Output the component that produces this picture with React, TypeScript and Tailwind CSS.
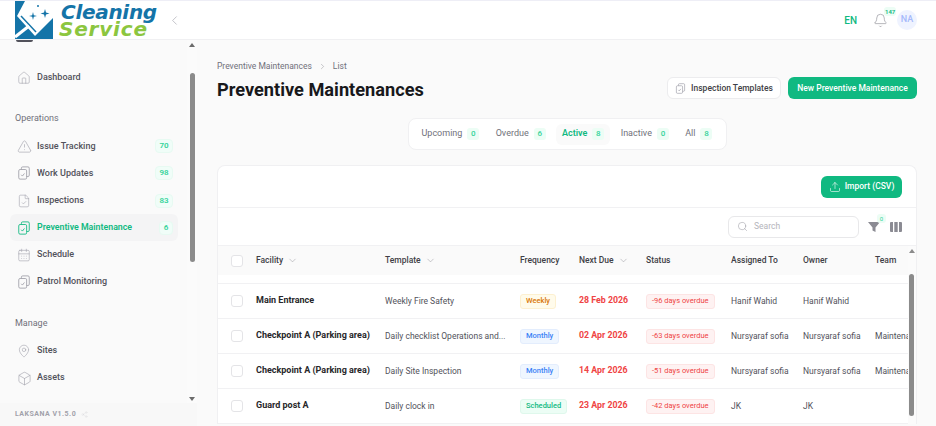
import React from "react";
import { Bell, Box, CalendarDays, ChevronDown, ChevronLeft, ChevronRight, FileCheck, Home, MapPin, Search, Share2, TriangleAlert, Upload } from "lucide-react";

const font = { fontFamily: "Roboto, sans-serif" };
const tableCols = "grid grid-cols-[25px_129px_135px_59px_67px_85px_72px_72px_40px] items-center";

function ClipsIcon({ className = "" }: { className?: string }) {
  return (
    <svg viewBox="0 0 16 16" fill="none" stroke="currentColor" strokeWidth="1" className={className}>
      <rect x="2" y="4" width="9" height="11" rx="1.5" />
      <path d="M5 4V2.500A1.500 1.500 0 0 1 6.500 1h6A1.500 1.500 0 0 1 14 2.500v8a1.500 1.500 0 0 1-1.500 1.500H11" />
      <path d="M4.800 10l1.400 1.500 2.300-3" />
    </svg>
  );
}

function Logo() {
  return (
    <div className="flex items-start">
      <svg viewBox="0 0 38 38" className="w-[38px] h-[38px] ml-[15px] shrink-0">
        <rect width="38" height="38" fill="#1474a8" />
        <path d="M10 0H38V17L20 35L2 15Z" fill="#fff" />
        <path d="M6 15L21 31" stroke="#1474a8" strokeWidth="1.500" />
        <path d="M0 36L14 25" stroke="#fff" strokeWidth="3" />
        <path d="M18 11l.8 3.200 3.200.8-3.200.8L18 19l-.8-3.200-3.200-.8 3.200-.8zM30 8l1 3.500 3.500 1-3.500 1-1 3.500-1-3.500-3.500-1 3.500-1z" fill="#1474a8" />
        <circle cx="23" cy="5" r="1" fill="#1474a8" />
      </svg>
      <div className="ml-[8px] mt-[1px] font-bold italic" style={{ fontFamily: "'DejaVu Sans', sans-serif" }}>
        <div className="text-[#1474a8] text-[20px] leading-[20px] tracking-[-0.3px]">Cleaning</div>
        <div className="text-[#8cc63f] text-[20px] leading-[15px] ml-[-2px] tracking-[0.8px]">Service</div>
      </div>
    </div>
  );
}

function NavItem({ label, icon, count, active }: { label: string; icon: React.ReactNode; count?: number; active?: boolean }) {
  return (
    <div className={`mx-[10px] h-[27.2px] w-[168px] flex items-center pl-[6px] pr-[5px] rounded-md ${active ? "bg-[#f4f4f5] text-[#10b981]" : "text-[#52525b]"}`}>
      <span className={`w-[16px] h-[16px] flex items-center justify-center ${active ? "text-[#10b981]" : "text-[#a1a1aa]"}`}>{icon}</span>
      <span className={`ml-[5px] flex-1 ${active ? "text-[8.800px] font-semibold" : "text-[9px] font-medium"}`}>{label}</span>
      {count !== undefined && (
        <span className={`h-[14px] rounded-[4px] bg-[#f0fdf8] border border-[#e7faf2] text-[#34d399] text-[8px] font-semibold flex items-center justify-center ${active ? "w-[14px]" : "w-[18px]"}`}>{count}</span>
      )}
    </div>
  );
}

function Sidebar() {
  return (
    <aside className="relative w-[197px] shrink-0 flex flex-col bg-[#fafafa] overflow-hidden">
      <div className="flex-1">
        <div className="ml-[16px] h-[2px] w-[17px] rounded-b bg-[#52525b]" />
        <div className="pt-[22px]">
          <NavItem label="Dashboard" icon={<Home size={14} strokeWidth={1} />} />
        </div>
        <div className="mt-[21px] ml-[15px] h-[14px] text-[9px] text-[#71717a] flex items-center">Operations</div>
        <div className="mt-[6.500px]">
          <NavItem label="Issue Tracking" count={70} icon={<TriangleAlert size={15} strokeWidth={1} />} />
          <NavItem label="Work Updates" count={98} icon={<ClipsIcon className="w-[14px] h-[14px]" />} />
          <NavItem label="Inspections" count={83} icon={<FileCheck size={14} strokeWidth={1} />} />
          <NavItem label="Preventive Maintenance" count={6} active icon={<ClipsIcon className="w-[14px] h-[14px]" />} />
          <NavItem label="Schedule" icon={<CalendarDays size={14} strokeWidth={1} />} />
          <NavItem label="Patrol Monitoring" icon={<ClipsIcon className="w-[14px] h-[14px]" />} />
        </div>
        <div className="mt-[20.500px] ml-[15px] h-[14px] text-[9px] text-[#71717a] flex items-center">Manage</div>
        <div className="mt-[7px]">
          <NavItem label="Sites" icon={<MapPin size={14} strokeWidth={1} />} />
          <NavItem label="Assets" icon={<Box size={15} strokeWidth={1} />} />
        </div>
      </div>
      <div className="h-[23px] shrink-0 bg-[#f8f8f8] flex items-center pl-[15px] gap-[5px] text-[#a1a1aa]">
        <span className="text-[7px] font-bold tracking-[0.5px]">LAKSANA V1.5.0</span>
        <Share2 size={7} strokeWidth={1} className="text-[#d4d4d8]" />
      </div>
      <div className="absolute right-0 top-0 bottom-[23px] w-[10px] bg-[#fbfbfb]">
        <div className="absolute left-[2px] top-[3px] border-x-[3px] border-x-transparent border-b-[4px] border-b-[#6b6b6b]" />
        <div className="absolute left-[3px] top-[33px] h-[189px] w-[5px] rounded-full bg-[#8b8b8b]" />
        <div className="absolute left-[2px] bottom-[2px] border-x-[3px] border-x-transparent border-t-[4px] border-t-[#6b6b6b]" />
      </div>
    </aside>
  );
}

function TabItem({ label, n, active }: { label: string; n: number; active?: boolean }) {
  return (
    <div className={`h-[21px] px-[6px] rounded-md flex items-center gap-[5px] ${active ? "bg-[#fafafa] text-[#10b981] font-semibold" : "text-[#71717a]"}`}>
      <span className="text-[9px]">{label}</span>
      <span className="w-[12px] h-[12px] rounded-[3px] bg-[#ecfdf5] text-[#34d399] text-[8px] font-medium flex items-center justify-center">{n}</span>
    </div>
  );
}

function SortHead({ label }: { label: string }) {
  return (
    <div className="flex items-center gap-[4px]">
      {label}
      <ChevronDown size={11} strokeWidth={1} className="text-[#8b8b93]" />
    </div>
  );
}

const rows = [
  { facility: "Main Entrance", template: "Weekly Fire Safety", freq: "Weekly", due: "28 Feb 2026", status: "-96 days overdue", assigned: "Hanif Wahid", owner: "Hanif Wahid", team: "" },
  { facility: "Checkpoint A (Parking area)", template: "Daily checklist Operations and...", freq: "Monthly", due: "02 Apr 2026", status: "-63 days overdue", assigned: "Nursyaraf sofia", owner: "Nursyaraf sofia", team: "Maintenance" },
  { facility: "Checkpoint A (Parking area)", template: "Daily Site Inspection", freq: "Monthly", due: "14 Apr 2026", status: "-51 days overdue", assigned: "Nursyaraf sofia", owner: "Nursyaraf sofia", team: "Maintenance" },
  { facility: "Guard post A", template: "Daily clock in", freq: "Scheduled", due: "23 Apr 2026", status: "-42 days overdue", assigned: "JK", owner: "JK", team: "" },
];

const freqStyle: Record<string, string> = {
  Weekly: "bg-[#fffbeb] border-[#fdf0d0] text-[#d97706]",
  Monthly: "bg-[#eff6ff] border-[#e3edfd] text-[#3b82f6]",
  Scheduled: "bg-[#ecfdf5] border-[#dff8ec] text-[#10b981]",
};

function Checkbox() {
  return <div className="w-[12px] h-[12px] rounded-[3px] bg-white border border-[#e4e4e7]" />;
}

function DataTable() {
  return (
    <div className="relative">
      <div className={`${tableCols} h-[29px] pl-[13px] bg-[#fafafa] text-[8.500px] font-medium text-[#3f3f46]`}>
        <Checkbox />
        <SortHead label="Facility" />
        <SortHead label="Template" />
        <div>Frequency</div>
        <SortHead label="Next Due" />
        <div>Status</div>
        <div>Assigned To</div>
        <div>Owner</div>
        <div>Team</div>
      </div>
      <div className="h-[9px] border-b border-[#f1f1f3]" />
      {rows.map((r, i) => (
        <div key={i} className={`${tableCols} h-[35px] pl-[13px] border-b border-[#f1f1f3] text-[8.500px] text-[#52525b]`}>
          <Checkbox />
          <div className="font-bold text-[9px] text-[#27272a] whitespace-nowrap">{r.facility}</div>
          <div className="whitespace-nowrap">{r.template}</div>
          <div>
            <span className={`inline-flex items-center h-[15px] px-[5px] rounded-[3px] border text-[7.500px] font-medium ${freqStyle[r.freq]}`}>{r.freq}</span>
          </div>
          <div className="font-bold text-[8.800px] text-[#ef4444] whitespace-nowrap">{r.due}</div>
          <div>
            <span className="inline-flex items-center h-[15px] px-[5px] rounded-[3px] border border-[#fde4e4] bg-[#fef2f2] text-[#ef4444] text-[7.500px] whitespace-nowrap">{r.status}</span>
          </div>
          <div className="whitespace-nowrap">{r.assigned}</div>
          <div className="whitespace-nowrap">{r.owner}</div>
          <div className="whitespace-nowrap overflow-hidden">{r.team}</div>
        </div>
      ))}
      <div className="absolute right-0 top-0 bottom-0 w-[8px] bg-[#fbfbfb]">
        <div className="absolute left-[1px] top-[3px] border-x-[3px] border-x-transparent border-b-[4px] border-b-[#8b8b8b]" />
        <div className="absolute left-[1px] top-[28px] h-[142px] w-[5px] rounded-full bg-[#8b8b8b]" />
      </div>
    </div>
  );
}

export default function App() {
  return (
    <div className="w-[936px] h-[426px] overflow-hidden flex flex-col bg-[#fafafa]" style={font}>
      <header className="h-[40px] shrink-0 bg-white border-t border-t-[#eeeef6] border-b border-b-[#f0f0f2] flex items-center">
        <div className="w-[197px] h-full flex items-start relative">
          <Logo />
          <ChevronLeft size={15} strokeWidth={1} className="absolute left-[167px] top-[12px] text-[#a1a1aa]" />
        </div>
        <div className="ml-auto flex items-center pr-[19px]">
          <span className="text-[10px] font-medium text-[#10b981]">EN</span>
          <div className="relative ml-[16px] mr-[9px]">
            <Bell size={15} strokeWidth={1} className="text-[#8b8b93]" />
            <span className="absolute left-[11px] top-[-6px] text-[6px] font-semibold text-[#10b981] bg-[#ecfdf5] rounded-[3px] px-[1px]">147</span>
          </div>
          <div className="w-[20px] h-[20px] rounded-full bg-[#eff3ff] text-[#a5b9fb] text-[9px] font-medium flex items-center justify-center">NA</div>
        </div>
      </header>
      <div className="flex-1 flex min-h-0">
        <Sidebar />
        <main className="flex-1 min-w-0 pl-[20px] pr-[19px] overflow-hidden">
          <div className="flex justify-between">
            <div>
              <div className="mt-[20px] h-[12px] flex items-center gap-[6px] text-[8.500px] text-[#71717a]">
                <span>Preventive Maintenances</span>
                <ChevronRight size={9} strokeWidth={1} />
                <span>List</span>
              </div>
              <h1 className="mt-[6px] text-[18.200px] leading-[24px] font-bold text-[#18181b]">Preventive Maintenances</h1>
            </div>
            <div className="mt-[37px] flex gap-[7px] h-[22px]">
              <button className="w-[114px] rounded-md bg-white border border-[#ececee] flex items-center justify-center gap-[5px] text-[8.500px] font-medium text-[#3f3f46]">
                <ClipsIcon className="w-[11px] h-[11px] text-[#a1a1aa]" />
                Inspection Templates
              </button>
              <button className="w-[129px] rounded-md bg-[#10b981] flex items-center justify-center text-[8.500px] font-medium text-white">New Preventive Maintenance</button>
            </div>
          </div>
          <div className="mt-[16px] flex justify-center">
            <div className="h-[32px] w-[319px] bg-white rounded-lg border border-[#f0f0f2] flex items-center justify-between px-[7px]">
              <TabItem label="Upcoming" n={0} />
              <TabItem label="Overdue" n={6} />
              <TabItem label="Active" n={8} active />
              <TabItem label="Inactive" n={0} />
              <TabItem label="All" n={8} />
            </div>
          </div>
          <section className="mt-[15px] bg-white rounded-t-lg border border-b-0 border-[#f0f0f2]">
            <div className="h-[42px] flex items-center justify-end pr-[14px] border-b border-[#f1f1f3]">
              <button className="w-[81px] h-[22px] rounded-md bg-[#10b981] flex items-center justify-center gap-[4px] text-white text-[8.500px] font-medium">
                <Upload size={12} strokeWidth={1.2} />
                Import (CSV)
              </button>
            </div>
            <div className="h-[38px] flex items-center justify-end pr-[14px] border-b border-[#f1f1f3]">
              <div className="w-[131px] h-[22px] rounded-md border border-[#e8e8ea] flex items-center pl-[8px] gap-[6px] text-[#b4b4bb] text-[8.500px]">
                <Search size={11} strokeWidth={1} className="text-[#8b8b93]" />
                Search
              </div>
              <div className="relative ml-[9px]">
                <svg viewBox="0 0 12 12" className="w-[12px] h-[12px] text-[#8b8b93]" fill="currentColor"><path d="M0 1h12L7.500 6.500V11l-3-1.500V6.500z" /></svg>
                <span className="absolute left-[9px] top-[-7px] w-[9px] h-[9px] rounded-[3px] bg-[#ecfdf5] text-[#34d399] text-[6px] flex items-center justify-center">0</span>
              </div>
              <svg viewBox="0 0 12 10" className="ml-[10px] w-[12px] h-[10px] text-[#8b8b93]" fill="currentColor"><path d="M0 1a1 1 0 0 1 1-1h2v10H1a1 1 0 0 1-1-1zM4.300 0h3.400v10H4.300zM9 0h2a1 1 0 0 1 1 1v8a1 1 0 0 1-1 1H9z" /></svg>
            </div>
            <DataTable />
          </section>
        </main>
      </div>
    </div>
  );
}
